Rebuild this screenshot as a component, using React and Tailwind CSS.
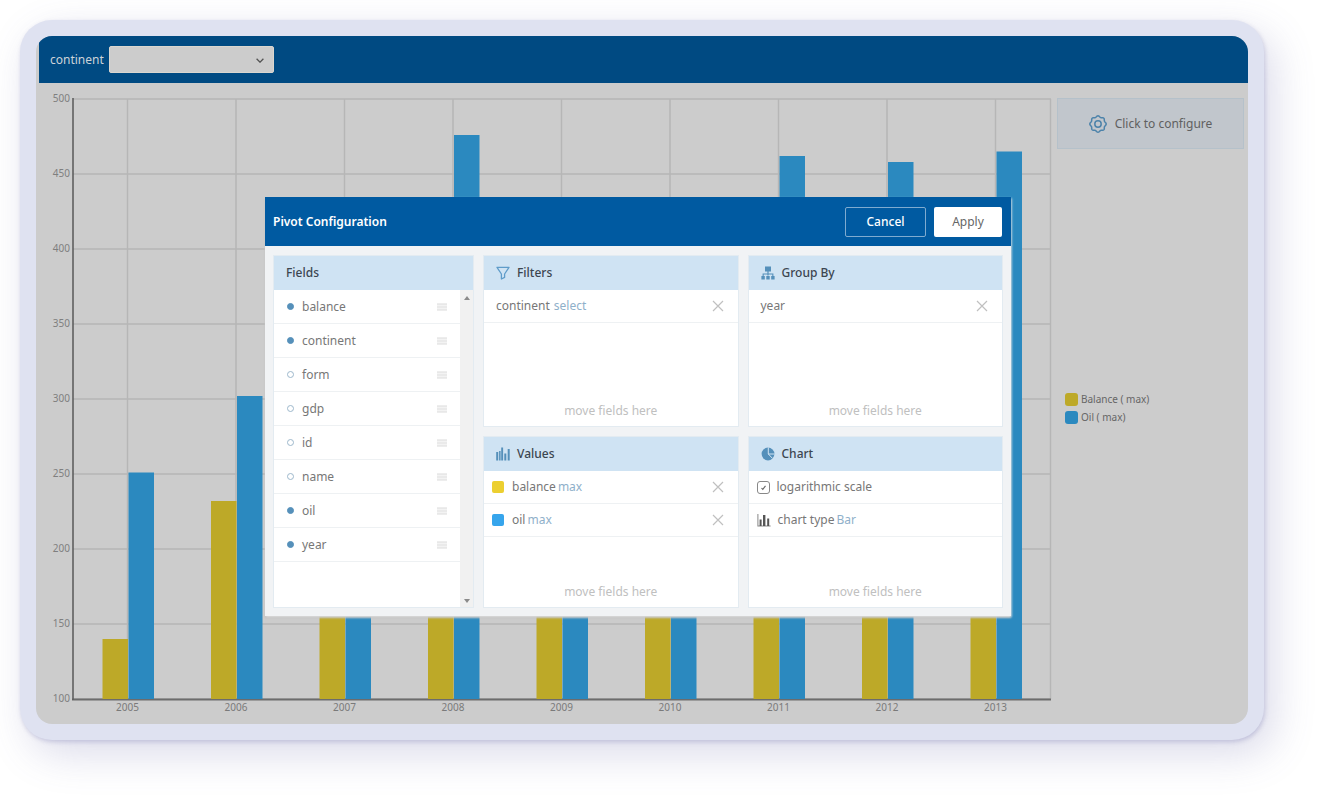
import React, { useState } from "react";

const YEARS = [
  { year: 2005, balance: 140, oil: 251 },
  { year: 2006, balance: 232, oil: 302 },
  { year: 2007, balance: 210, oil: 280 },
  { year: 2008, balance: 240, oil: 476 },
  { year: 2009, balance: 260, oil: 380 },
  { year: 2010, balance: 230, oil: 400 },
  { year: 2011, balance: 250, oil: 462 },
  { year: 2012, balance: 270, oil: 458 },
  { year: 2013, balance: 300, oil: 465 },
];
const TICKS = [500, 450, 400, 350, 300, 250, 200, 150, 100];
const FIELDS = [
  { name: "balance", used: true },
  { name: "continent", used: true },
  { name: "form", used: false },
  { name: "gdp", used: false },
  { name: "id", used: false },
  { name: "name", used: false },
  { name: "oil", used: true },
  { name: "year", used: true },
];

const PLOT = { left: 37, right: 1015, top: 15, bottom: 615 };
const STEP = 108.5;
const yOf = (v) => PLOT.bottom - (v - 100) * 1.5;
const xOf = (i) => 91.5 + i * STEP;

function BarChart() {
  return (
    <svg viewBox="0 0 1016 640" className="block h-auto w-full" role="img" aria-label="Balance and oil by year">
      {TICKS.map((t) => (
        <g key={t}>
          <line x1={PLOT.left} x2={PLOT.right} y1={yOf(t)} y2={yOf(t)} stroke="#b6b6b6" strokeWidth="1.5" />
          <text x="34" y={yOf(t) + 3} textAnchor="end" className="fill-[#7f7f7f] text-[10px]">{t}</text>
        </g>
      ))}
      {YEARS.map((d, i) => (
        <line key={d.year} x1={xOf(i)} x2={xOf(i)} y1={PLOT.top} y2={PLOT.bottom} stroke="#b6b6b6" strokeWidth="1.5" />
      ))}
      <line x1="1014.5" x2="1014.5" y1={PLOT.top} y2={PLOT.bottom} stroke="#b6b6b6" strokeWidth="1.5" />
      <line x1="36" x2="1015" y1="615.5" y2="615.5" stroke="#6c6c6c" strokeWidth="2" />
      <line x1="37" x2="37" y1="14" y2="616" stroke="#5f5f5f" strokeWidth="1.6" />
      {YEARS.map((d, i) => (
        <g key={d.year}>
          <rect x={xOf(i) - 25} y={yOf(d.balance)} width="25.5" height={PLOT.bottom - yOf(d.balance)} fill="#bda928" />
          <rect x={xOf(i) + 1} y={yOf(d.oil)} width="25.5" height={PLOT.bottom - yOf(d.oil)} fill="#2b89bf" />
          <text x={xOf(i)} y="627" textAnchor="middle" className="fill-[#7a7a7a] text-[10px]">{d.year}</text>
        </g>
      ))}
    </svg>
  );
}

function GearIcon() {
  const pts = [];
  for (let i = 0; i <= 96; i++) {
    const a = (i / 96) * Math.PI * 2;
    const r = 7.6 + 0.6 * Math.cos(a * 8);
    pts.push((9 + r * Math.sin(a)).toFixed(2) + " " + (9 - r * Math.cos(a)).toFixed(2));
  }
  return (
    <svg viewBox="0 0 18 18" className="size-[18px]" fill="none" stroke="#4d83aa" strokeWidth="1.5" aria-hidden="true">
      <path d={"M" + pts.join("L") + "Z"} />
      <circle cx="9" cy="9" r="3.2" />
    </svg>
  );
}

function FilterIcon() {
  return (
    <svg viewBox="0 0 14 14" className="size-3.5" fill="none" stroke="#5f9cc9" strokeWidth="1.3" aria-hidden="true">
      <path d="M1 1.4h12L8.6 8v3.4L5.4 13V8Z" strokeLinejoin="round" />
    </svg>
  );
}

function TreeIcon() {
  return (
    <svg viewBox="0 0 14 14" className="size-3.5" fill="#5590ba" aria-hidden="true">
      <path d="M4 .5h6v5H4zM6.4 5.5h1.2v4H6.4zM1.6 7.4h10.8v1.1H1.6zM1.6 8h1.1v2H1.6zM11.3 8h1.1v2h-1.1z" />
      <path d="M.4 10h3.4v3.5H.4zM5.3 10h3.4v3.5H5.3zM10.2 10h3.4v3.5h-3.4z" />
    </svg>
  );
}

function BarsIcon() {
  return (
    <svg viewBox="0 0 14 14" className="size-3.5" fill="#5590ba" aria-hidden="true">
      <path d="M.2 5h2v8.5h-2zM3.1 4h1.5v9.5H3.1zM5.2 .5h1.9v13H5.200zM8.300 6.500h2v7h-2zM11.700 2h2v11.500h-2z" />
    </svg>
  );
}

function PieIcon() {
  return (
    <svg viewBox="0 0 14 14" className="size-3.5" aria-hidden="true">
      <circle cx="7" cy="7" r="6.4" fill="#5590ba" />
      <path d="M7.3 .4V7l4.2 4.4M7.3 7h6.2" fill="none" stroke="#cfe3f3" strokeWidth="1" />
    </svg>
  );
}

function TypeIcon() {
  return (
    <svg viewBox="0 0 14 14" className="size-3.5" fill="#555" aria-hidden="true">
      <path d="M.4 1h1v12.5h-1zM1 12.6h12.6v.9H1z" fill="#888" />
      <path d="M2.6 6.5h2V13h-2zM6 2h2.4v11H6zM10.2 5.5h2V13h-2z" />
    </svg>
  );
}

function CloseButton({ label }) {
  return (
    <button type="button" aria-label={label} className="ml-auto">
      <svg viewBox="0 0 12 12" className="size-3" fill="none" stroke="#c0c0c0" strokeWidth="1.2" aria-hidden="true">
        <path d="M1 1l10 10M11 1L1 11" />
      </svg>
    </button>
  );
}

function Panel({ title, icon, children }) {
  return (
    <section className="flex min-h-43 flex-col border border-[#e3ebf1] bg-white">
      <h2 className="flex h-[34px] shrink-0 items-center gap-[7px] bg-[#cfe3f3] px-3 text-[12px] font-medium text-[#3c4650]">
        {icon}
        {title}
      </h2>
      {children}
      <p className="mt-auto pb-[7px] text-center text-[12px] leading-4 text-[#c0c0c0]">move fields here</p>
    </section>
  );
}

function Row({ children, tight }) {
  return (
    <div className={"flex h-[33px] shrink-0 items-center border-b border-[#eef1f3] pr-3.5 text-[12px] text-[#777] " + (tight ? "pl-2" : "pl-3")}>
      {children}
    </div>
  );
}

function PivotDialog() {
  const [log, setLog] = useState(true);
  return (
    <div role="dialog" aria-label="Pivot Configuration" className="w-[746px] bg-[#f1f3f5] shadow-[1px_1px_2px_rgba(255,255,255,0.5),0_2px_2px_#bdbdbd]">
      <header className="flex h-[49px] items-center gap-2 bg-[#005aa1] pl-2 pr-[9px] pt-px">
        <h1 className="mr-auto text-[12px] font-semibold text-white">Pivot Configuration</h1>
        <button type="button" className="h-[30px] w-[81px] rounded-xs border border-[#7fabd0] text-[12px] font-medium text-white">Cancel</button>
        <button type="button" className="h-[30px] w-[68px] rounded-xs bg-white text-[12px] text-[#666]">Apply</button>
      </header>
      <div className="grid grid-cols-[201px_1fr_1fr] gap-[9px] px-2 pb-2 pt-[9px]">
        <section className="row-span-2 flex flex-col border border-[#e3ebf1] bg-white">
          <h2 className="flex h-[34px] items-center bg-[#cfe3f3] px-3 text-[12px] font-medium text-[#3c4650]">Fields</h2>
          <div className="flex flex-1">
            <ul className="flex-1">
              {FIELDS.map((f) => (
                <li key={f.name} className="flex h-[34px] items-center border-b border-[#eef1f3] px-[13px] text-[12px] text-[#777]">
                  <span className={"mr-2 size-[7px] rounded-full border " + (f.used ? "border-[#5590ba] bg-[#5590ba]" : "border-[#9db8cc]")} />
                  {f.name}
                  <svg viewBox="0 0 10 8" className="ml-auto h-2 w-2.5" aria-hidden="true">
                    <path d="M0 0h10v8H0z" fill="#f3f3f3" />
                    <path d="M0 .5h10v1.500H0zM0 3.200h10v1.500H0zM0 6h10v1.500H0z" fill="#e8e8e8" />
                  </svg>
                </li>
              ))}
            </ul>
            <div className="flex w-[13px] flex-col items-center justify-between bg-[#f1f1f1] pb-1 pt-1.5" aria-hidden="true">
              <svg viewBox="0 0 6 4" className="h-1 w-1.5" fill="#8a8a8a"><path d="M0 4l3-4 3 4z" /></svg>
              <svg viewBox="0 0 6 4" className="h-1 w-1.5" fill="#8a8a8a"><path d="M0 0l3 4 3-4z" /></svg>
            </div>
          </div>
        </section>
        <Panel title="Filters" icon={<FilterIcon />}>
          <Row>
            continent
            <button type="button" className="ml-1 text-[#8fb0ca]">select</button>
            <CloseButton label="Remove continent" />
          </Row>
        </Panel>
        <Panel title="Group By" icon={<TreeIcon />}>
          <Row>
            year
            <CloseButton label="Remove year" />
          </Row>
        </Panel>
        <Panel title="Values" icon={<BarsIcon />}>
          <Row tight>
            <span className="mr-2 size-3 rounded-xs bg-[#eccf30]" />
            balance
            <button type="button" className="ml-0.5 text-[#8fb0ca]">max</button>
            <CloseButton label="Remove balance" />
          </Row>
          <Row tight>
            <span className="mr-2 size-3 rounded-xs bg-[#36a5ec]" />
            oil
            <button type="button" className="ml-0.5 text-[#8fb0ca]">max</button>
            <CloseButton label="Remove oil" />
          </Row>
        </Panel>
        <Panel title="Chart" icon={<PieIcon />}>
          <Row tight>
            <label className="flex items-center gap-[7px]">
              <span className="relative flex">
                <input
                  type="checkbox"
                  checked={log}
                  onChange={(e) => setLog(e.target.checked)}
                  className="size-[13px] appearance-none rounded-[3px] border border-[#888]"
                />
                {log && (
                  <svg viewBox="0 0 13 13" className="pointer-events-none absolute inset-0 size-[13px]" fill="none" stroke="#666" strokeWidth="1.1" aria-hidden="true">
                    <path d="M4.5 7l1.3 1.4 2.700-3.500" />
                  </svg>
                )}
              </span>
              logarithmic scale
            </label>
          </Row>
          <Row tight>
            <TypeIcon />
            <span className="ml-[7px]">chart type</span>
            <button type="button" className="ml-0.5 text-[#8fb0ca]">Bar</button>
          </Row>
        </Panel>
      </div>
    </div>
  );
}

export default function App() {
  return (
    <main className="flex min-h-screen bg-white pb-15 pl-5 pr-15 pt-5 font-['Noto_Sans',sans-serif]">
      <div className="flex-1 rounded-[32px] bg-[#dfe2f1] p-4 shadow-[10px_14px_40px_rgba(90,90,160,0.22),1px_2px_4px_rgba(90,90,160,0.25)]">
        <div className="relative h-full overflow-hidden rounded-2xl bg-[#ccc]">
          <header className="ml-[3px] flex h-[47px] items-center gap-[5px] bg-[#004a82] pl-[11px]">
            <label htmlFor="continent" className="text-[12px] text-[#ccd3d8]">continent</label>
            <span className="relative flex">
              <select id="continent" defaultValue="" className="h-[27px] w-[165px] appearance-none rounded-xs border border-[#dad6cf] bg-[#ccc] px-2 text-[12px]">
                <option value=""></option>
                <option value="Europe">Europe</option>
                <option value="Asia">Asia</option>
              </select>
              <svg viewBox="0 0 8 5" className="pointer-events-none absolute right-2.5 top-3 h-[5px] w-2" fill="none" stroke="#555" strokeWidth="1.3" aria-hidden="true">
                <path d="M.6 .8L4 4.2 7.4 .8" />
              </svg>
            </span>
          </header>
          <div className="flex gap-[5px] pr-1 pt-px">
            <div className="min-w-0 flex-1">
              <BarChart />
            </div>
            <aside className="flex w-[187px] shrink-0 flex-col pt-3.5">
              <button type="button" className="flex h-[51px] items-center justify-center gap-2 border border-[#b5c1ca] bg-[#c1c6cc] text-[12px] text-[#606060]">
                <GearIcon />
                Click to configure
              </button>
              <ul className="mt-[242px] flex flex-col gap-0.5 pl-2 text-[10px] leading-4 text-[#666]">
                <li className="flex items-center gap-[3px]">
                  <span className="size-[13px] rounded-[3px] bg-[#bda928]" />
                  Balance ( max)
                </li>
                <li className="flex items-center gap-[3px]">
                  <span className="size-[13px] rounded-[3px] bg-[#2b89bf]" />
                  Oil ( max)
                </li>
              </ul>
            </aside>
          </div>
          <div className="absolute inset-0 flex items-start justify-center pr-2 pt-[161px]">
            <PivotDialog />
          </div>
        </div>
      </div>
    </main>
  );
}
